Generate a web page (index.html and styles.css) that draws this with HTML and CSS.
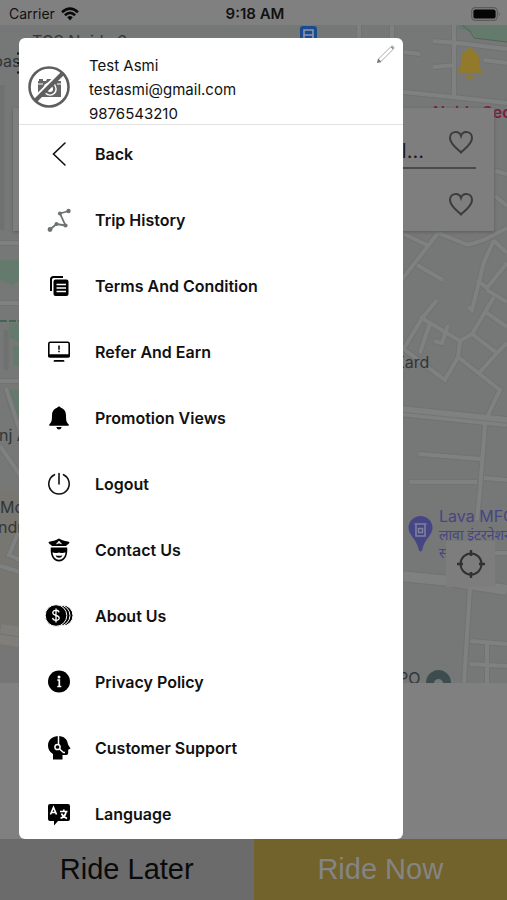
FILE: index.html
```html
<!DOCTYPE html>
<html lang="en">
<head>
<meta charset="utf-8">
<meta name="viewport" content="width=device-width, initial-scale=1">
<title>Ride booking</title>
<link rel="stylesheet" href="styles.css">
</head>
<body>
<div class="app">
  <header class="status">
    <div class="status-left">
      <span>Carrier</span>
      <svg width="18" height="14" viewBox="0 0 18 14" aria-hidden="true"><g fill="none" stroke="#0a0a0a" stroke-width="2.6"><path d="M1 5.2Q9-2 17 5.2"/><path d="M3.9 8.3Q9 3.6 14.1 8.3"/></g><path d="M6.2 10.2Q9 7.8 11.8 10.2L9 13.4z" fill="#0a0a0a"/></svg>
    </div>
    <span class="clock">9:18 AM</span>
    <div class="status-right">
      <svg width="30" height="14" viewBox="0 0 30 14" aria-hidden="true"><rect x=".7" y=".7" width="25.6" height="12.6" rx="3.6" fill="none" stroke="#5c5c5c" stroke-width="1.2"/><rect x="2.4" y="2.4" width="22.2" height="9.2" rx="2.2" fill="#050505"/><path d="M27.8 4.800q1.800 2.200 0 4.400z" fill="#4c4c4c"/></svg>
    </div>
  </header>

  <main class="home">
    <section class="map" aria-label="Map">
      <svg class="map-art" viewBox="0 25 507 658" preserveAspectRatio="xMidYMin slice">
        <defs>
          <path id="streets" d="M454 25V97M403 92L453 97 507 103M433 41L458 43 507 49M433 67L456 65M484 60L507 63M392 25V38M359 25V38M404 52L420 54M495 171L507 174M495 196L507 206M404 234L427 245M400 282L438 233 468 245 484 240 507 228M494 240L484 262 472 310 468 307M417 265L443 280M494 241L507 253M477 280L487 288 507 263M403 350L423 317 437 300M420 317L460 341 472 334 494 297M487 290L507 302M487 313L507 327M472 334L497 353 507 343M497 353L480 372M460 341L458 357 445 380 405 350M458 357L500 390 489 413 485 425 480 490 477 520M430 323L420 353M434 341L442 343 448 325M419 454L481 459M410 482L477 482M484 478L507 480M495 553H507M470 588L464 683M470 641L507 644M470 664L507 666M487 643V683M0 243H20M0 303H20M0 381H20M6 388L20 431M0 446L20 475M20 528L9 555 20 560M0 566L20 572"/>
          <path id="avenues" d="M400 411L507 422M400 576L450 581 507 590"/>
        </defs>
        <rect y="25" width="507" height="658" fill="#767777"/>
        <path d="M0 490H20V683H0z" fill="#777670"/>
        <path d="M0 648H20V683H0z" fill="#767676"/>
        <g fill="#647a6c">
          <path d="M458 25H507V42L477 38 470 31 458 29z"/>
          <path d="M0 260H20V281L12 285 0 280zM9 323H20V342L10 338zM13 346H20V366H14zM5 390H20V424L8 408z"/>
        </g>
        <path d="M462 25L470 31 474 38 507 42" fill="none" stroke="#4d6655"/>
        <path d="M0 321H20" stroke="#456451" stroke-width="2" stroke-dasharray="7 2"/>
        <g fill="none">
          <use href="#streets" stroke="#717272" stroke-width="6"/>
          <use href="#avenues" stroke="#717272" stroke-width="12"/>
          <use href="#streets" stroke="#7f8080" stroke-width="4"/>
          <use href="#avenues" stroke="#7f8080" stroke-width="10"/>
          <path d="M2 85V230M6 330V370" stroke="#6f7070" stroke-width="5"/>
          <path d="M400 412L507 423" stroke="#737474"/>
          <path d="M0 634L20 637" stroke="#7f7e7a" stroke-width="20"/>
          <path d="M0 634L20 637" stroke="#72726f"/>
        </g>
        <g class="map-label">
          <text x="32" y="47">TCS Noida 6</text>
          <text x="-7" y="67">pass</text>
          <text x="-1" y="441">nj A</text>
          <text x="0" y="513">Mod</text>
          <text x="-2" y="533">ndra</text>
          <text x="394" y="368">Kard</text>
          <text x="396" y="386" class="hindi">ई</text>
          <text x="398" y="684">PO</text>
        </g>
        <text x="433" y="118" class="metro-name">Noida Sec</text>
        <text x="439" y="522" class="place">Lava MFG</text>
        <text x="439" y="540" class="place hindi">लावा इंटरनेशनल</text>
        <text x="439" y="558" class="place hindi">स</text>
        <rect x="300" y="26" width="17" height="18" rx="3" fill="#194b8e"/>
        <path d="M304 30h9v9h-9zM304 35h9" fill="none" stroke="#8b98aa" stroke-width="1.6"/>
        <path d="M420.500 516a12 12 0 0 1 12 12c0 7-8 11-10 21q-2 5-4 0c-2-10-10-14-10-21a12 12 0 0 1 12-12z" fill="#454683"/>
        <path d="M414.500 524h12M416 525v11h9v-11M418.500 528.500h4v4h-4z" fill="none" stroke="#8182a0" stroke-width="1.500"/>
        <path d="M426 683a12.500 13 0 0 1 25 0h-8a4.500 4 0 0 0-9 0z" fill="#3d4d4f"/>
      </svg>
      <div class="toolbar">
        <button class="plain" aria-label="Open menu"><svg width="28" height="22" viewBox="0 0 28 22"><path d="M0 1.500h28M0 11h28M0 20.500h28" stroke="#151515" stroke-width="2"/></svg></button>
        <button class="plain" aria-label="Notifications"><svg width="28" height="33" viewBox="0 0 28 33" fill="#93792a"><path d="M14 0q2 0 2.300 3.200C21 4.500 23 8.500 23 13c0 7 1 9 4.500 12.800H.5C4 22 5 20 5 13c0-4.500 2-8.500 6.700-9.800C12 0 14 0 14 0zM9.500 28h9q-1.500 4-4.500 4t-4.500-4z"/></svg></button>
      </div>
      <form class="trip">
        <div class="trip-row">
          <input class="place-input underlined" type="text" aria-label="Pickup" value="l...">
          <button type="button" class="plain" aria-label="Save pickup"><svg width="26" height="24" viewBox="0 0 26 24"><path class="heart" d="M13 22.500C9 18.500 2 14 2 8c0-7 9-8 11-2 2-6 11-5 11 2 0 6-7 10.500-11 14.500z"/></svg></button>
        </div>
        <div class="trip-row">
          <input class="place-input" type="text" aria-label="Destination">
          <button type="button" class="plain" aria-label="Save destination"><svg width="26" height="24" viewBox="0 0 26 24"><path class="heart" d="M13 22.500C9 18.500 2 14 2 8c0-7 9-8 11-2 2-6 11-5 11 2 0 6-7 10.500-11 14.500z"/></svg></button>
        </div>
      </form>
      <button class="plain locate" aria-label="My location"><svg width="28" height="28" viewBox="0 0 28 28" fill="none" stroke="#303131" stroke-width="2"><circle cx="14" cy="14" r="10.500"/><path d="M14 0v6M14 22v6M0 14h6M22 14h6" stroke-width="2.400"/></svg></button>
    </section>
  </main>

  <footer class="actions">
    <button class="later">Ride Later</button>
    <button class="now">Ride Now</button>
  </footer>

  <aside class="drawer" aria-label="Account menu">
    <div class="profile">
      <svg class="avatar" width="42" height="42" viewBox="0 0 42 42" aria-hidden="true">
        <path d="M10 15h1v-2h4v2h3l1-2h8l1 2h5v16H10z" fill="#666"/>
        <circle cx="22" cy="23" r="6.800" fill="#fff"/><circle cx="22" cy="23" r="5.400" fill="#666"/><circle cx="22" cy="23" r="3" fill="#fff"/>
        <path d="M10 18h5M29 18h4" stroke="#fff"/>
        <path d="M6.500 33L32.500 7" stroke="#fff" stroke-width="4.500"/>
        <path d="M7.500 34.500L34.500 7.500" stroke="#5e5e5e" stroke-width="4"/>
        <circle cx="21" cy="21" r="19.500" fill="none" stroke="#5e5e5e" stroke-width="2.600"/>
      </svg>
      <div class="who"><span>Test Asmi</span><span>testasmi@gmail.com</span><span>9876543210</span></div>
      <button class="plain edit" aria-label="Edit profile"><svg width="18" height="18" viewBox="0 0 18 18" fill="none" stroke="#aaa"><path d="M1 17l1-3.500L14 1.500q1.500-1 2.500 0t0 2.500L4.500 16z"/><path d="M1 17l.5-2 1.500 1.500zM14.500 2l1.500 1.500" stroke="#777" stroke-width="1.500"/></svg></button>
    </div>
    <nav>
      <ul class="menu">
        <li><a href="#back"><svg viewBox="0 0 28 28"><path d="M20 3L8.500 14 20 25" fill="none" stroke="#111" stroke-width="1.600" stroke-linecap="round"/></svg>Back</a></li>
        <li><a href="#trips"><svg viewBox="0 0 28 28"><path d="M5 23.500L11.500 18 20.500 19.500 15 7.500 23.500 5" fill="none" stroke="#6c7173" stroke-width="1.800"/><g fill="#6c7173"><circle cx="5" cy="23.500" r="2.400"/><circle cx="11.500" cy="18" r="2"/><circle cx="20.500" cy="19.500" r="2.100"/><circle cx="15" cy="7.500" r="2.100"/><circle cx="23.500" cy="5" r="2.200"/></g></svg>Trip History</a></li>
        <li><a href="#terms"><svg viewBox="0 0 28 28"><path d="M6 19V7.500Q6 5 8.500 5H18" fill="none" stroke="#000" stroke-width="2"/><rect x="8.500" y="7.500" width="15" height="16.500" rx="2"/><path d="M11.500 12.500h9.500M11.500 16h9.500M11.500 19.500h9.500" stroke="#fff" stroke-width="1.300"/></svg>Terms And Condition</a></li>
        <li><a href="#refer"><svg viewBox="0 0 28 28"><rect x="3.800" y="4.300" width="20.400" height="14.500" rx="1.500" fill="none" stroke="#000" stroke-width="1.600"/><path d="M3 16.300h22v1.700q0 1.500-1.500 1.500h-19Q3 19.500 3 18zM9.500 22h9q1 0 1 1.700h-11q0-1.700 1-1.700z"/><path d="M14 7.500v4.200M14 12.800v1.500" stroke="#000" stroke-width="1.500"/></svg>Refer And Earn</a></li>
        <li><a href="#promotions"><svg viewBox="0 0 28 28"><path d="M14 2.500q1.300 0 1.800 1.300C19.500 5 21 8 21 11.500c0 6 .8 7 2.700 8.800v1.400H4.300v-1.400C6.200 18.500 7 17.500 7 11.500c0-3.500 1.500-6.500 5.200-7.700.5-1.300 1.800-1.300 1.800-1.300zM11.300 23h5.400q-.7 2.500-2.700 2.500T11.300 23z"/></svg>Promotion Views</a></li>
        <li><a href="#logout"><svg viewBox="0 0 28 28" fill="none" stroke="#111" stroke-width="1.600" stroke-linecap="round"><path d="M14 3.500V14M9.500 4.700A10.200 10.200 0 1 0 18.500 4.700"/></svg>Logout</a></li>
        <li><a href="#contact"><svg viewBox="0 0 28 28"><path d="M14 2.500C17 4.500 21 5 24.500 6c0 2-2.500 2.500-3.500 4H7C6 8.500 3.500 8 3.500 6 7 5 11 4.500 14 2.500z"/><path d="M11.500 8L14 5l2.500 3-2.500-1z" fill="#fff" stroke="#fff" stroke-width=".6"/><path d="M5.800 11.500H22.200C23 20 19.500 25.500 14 25.500S5 20 5.800 11.500z"/><path d="M7.500 16.500h13c-.5 4.500-3 7.200-6.500 7.200s-6-2.700-6.500-7.200z" fill="#fff"/><path d="M7.500 13h13v2q-1 2-3.500 2-2 0-3-1-1 1-3 1-2.500 0-3.500-2zM10.500 19.300q3.500 1 7 0-.8 2.500-3.500 2.500t-3.500-2.500z"/></svg>Contact Us</a></li>
        <li><a href="#about"><svg viewBox="0 0 28 28"><g stroke="#fff" stroke-width="1"><circle cx="17.500" cy="13.500" r="10.500"/><circle cx="14.500" cy="13.500" r="10.500"/><circle cx="11" cy="13.500" r="10.800"/></g><path d="M14 10.300c-.6-3-6.300-2.500-6.200.5 0 3.500 6.400 1.800 6.400 5.300 0 3-6.200 3-6.600-.3M11 6.500v14" fill="none" stroke="#fff" stroke-width="1.300"/></svg>About Us</a></li>
        <li><a href="#privacy"><svg viewBox="0 0 28 28"><circle cx="14" cy="13.500" r="11"/><circle cx="14" cy="9" r="1.500" fill="#fff"/><path d="M12.300 12h2v6.500M12.300 18.500h4" fill="none" stroke="#fff" stroke-width="1.700"/></svg>Privacy Policy</a></li>
        <li><a href="#support"><svg viewBox="0 0 28 28"><path d="M8 25.500V20C4.500 18 3 15 3 11.500 3 5.500 8 2 13.500 2c5.500 0 9 3.500 9.500 8.500l2.500 4-2.300 1.200v3.300q0 2-2 2H17.500v4.500z"/><path d="M13.500 2v8" stroke="#fff" stroke-width="1.500"/><circle cx="12.500" cy="13" r="2.600" fill="none" stroke="#fff" stroke-width="1.500"/><path d="M14.500 15l4 3.500h1.500" fill="none" stroke="#fff" stroke-width="1.500"/></svg>Customer Support</a></li>
        <li><a href="#language"><svg viewBox="0 0 28 28"><path d="M5 4h18q2 0 2 2v13q0 2-2 2H13l-4 4.500V21H5q-2 0-2-2V6q0-2 2-2z"/><path d="M5.500 14.500L8.500 7.500 11.500 14.500M6.500 12.500h4" fill="none" stroke="#fff" stroke-width="1.700"/><path d="M15 11.500h7.500M18.800 9.500v2M21 12c-.6 3.500-3 5.500-5.500 6.300M16.500 13.500c1 2.500 3 4.200 5.500 4.800" fill="none" stroke="#fff" stroke-width="1.700"/></svg>Language</a></li>
      </ul>
    </nav>
  </aside>
</div>
</body>
</html>
```
FILE: styles.css
```css
* { box-sizing: border-box; }

body {
  margin: 0;
  background: #808080;
  color: #111;
  font-family: Inter, "Noto Sans", sans-serif;
}

.app {
  position: relative;
  display: flex;
  flex-direction: column;
  height: 100vh;
  overflow: hidden;
}

.plain {
  display: flex;
  padding: 0;
  border: 0;
  background: none;
}

/* Status bar */
.status {
  display: grid;
  grid-template-columns: 1fr auto 1fr;
  align-items: center;
  height: 25px;
  padding: 2px 6px 0 9px;
  font-size: 14px;
}
.status-left { display: flex; align-items: center; gap: 6px; }
.status-right { display: flex; justify-content: flex-end; }
.clock { font-size: 15px; font-weight: 600; }

/* Map */
.home {
  flex: 1;
  min-height: 0;
  padding-bottom: 156px;
}
.map {
  position: relative;
  height: 100%;
  padding: 20px 13px 0;
  overflow: hidden;
}
.map-art {
  position: absolute;
  inset: 0;
  width: 100%;
  height: 100%;
}
.map-label { font-size: 16px; fill: #303638; }
.metro-name { font-size: 16px; font-weight: 600; fill: #7b1d40; }
.place { font-size: 16px; fill: #454683; }
.hindi { font-family: "Noto Sans", sans-serif; font-size: 14px; }

.toolbar {
  position: relative;
  display: flex;
  justify-content: space-between;
  align-items: center;
  height: 36px;
  padding: 0 10px 0 4px;
}
.trip {
  position: relative;
  display: grid;
  gap: 2px;
  margin-top: 27px;
  padding: 1px 18px 0;
  background: #7e7e7e;
  box-shadow: 0 1px 3px #5c5c5c;
}
.trip-row {
  position: relative;
  height: 60px;
}
.trip-row .plain {
  position: absolute;
  right: 2px;
  top: 21px;
}
.place-input {
  width: 100%;
  height: 100%;
  padding: 26px 52px 0 0;
  border: 0;
  background: none;
  color: #1c1c1c;
  font: 20px Inter, sans-serif;
  text-align: right;
}
.underlined { border-bottom: 2px solid #4a4a4a; }
.heart { fill: none; stroke: #3c3c3c; stroke-width: 2; }
.locate {
  position: absolute;
  right: 12px;
  bottom: 96px;
  width: 49px;
  height: 46px;
  align-items: center;
  justify-content: center;
  background: #7d7d7d;
}

/* Booking actions */
.actions {
  display: grid;
  grid-template-columns: 1fr 1fr;
  height: 61px;
}
.actions button {
  border: 0;
  font: 29px "Liberation Sans", sans-serif;
}
.later { background: #6b6b6b; color: #0a0a0a; }
.now { background: #72622c; color: #858585; }

/* Drawer over the home screen */
.drawer {
  position: absolute;
  inset: 38px 104px 61px 19px;
  overflow: hidden auto;
  scrollbar-width: none;
  background: #fff;
  border-radius: 6px;
}
.profile {
  position: relative;
  display: flex;
  gap: 19px;
  height: 87px;
  padding: 16px 9px 0;
  border-bottom: 1px solid #e2e2e2;
  font-size: 15px;
  line-height: 24px;
}
.avatar { margin-top: 12px; }
.who { display: flex; flex-direction: column; }
.edit { position: absolute; top: 7px; right: 8px; }

.menu {
  display: grid;
  gap: 8px;
  margin: 0;
  padding: 0;
  list-style: none;
}
.menu a {
  display: flex;
  align-items: center;
  gap: 22px;
  height: 58px;
  padding-left: 26px;
  color: #111;
  font-size: 16px;
  font-weight: 600;
  text-decoration: none;
}
.menu svg { width: 28px; height: 28px; overflow: visible; }
```
